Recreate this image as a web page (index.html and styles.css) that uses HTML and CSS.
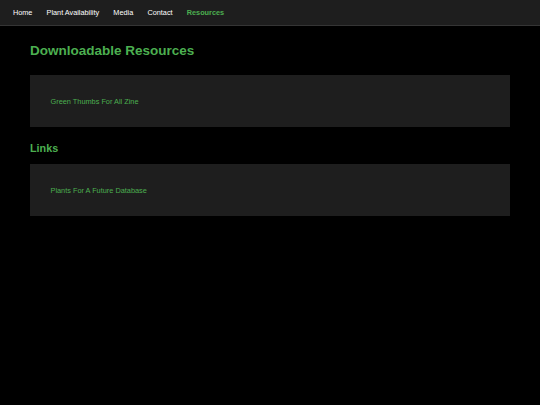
FILE: index.html
```html
<!DOCTYPE html>
<html>
<head>
<meta charset="utf-8">
<link rel="stylesheet" href="styles.css">
</head>
<body>
<nav class="nav">
  <a class="nav-link" href="#">Home</a>
  <a class="nav-link" href="#">Plant Availability</a>
  <a class="nav-link" href="#">Media</a>
  <a class="nav-link" href="#">Contact</a>
  <a class="nav-link active" href="#">Resources</a>
</nav>
<main class="main">
  <h1 class="title">Downloadable Resources</h1>
  <div class="card"><a class="card-link" href="#">Green Thumbs For All Zine</a></div>
  <h2 class="subtitle">Links</h2>
  <div class="card"><a class="card-link" href="#">Plants For A Future Database</a></div>
</main>
</body>
</html>
```
FILE: styles.css
```css
html, body {
  margin: 0;
  padding: 0;
  background: #000;
  font-family: "Liberation Sans", Arial, sans-serif;
}
.nav {
  display: flex;
  align-items: center;
  height: 25px;
  padding: 0 5.8px;
  background: #1e1e1e;
  border-bottom: 1px solid #353535;
}
.nav-link {
  color: #fff;
  text-decoration: none;
  font-size: 7.3px;
  line-height: 9px;
  padding: 0 7.1px;
}
.nav-link.active {
  color: #4caf50;
  font-weight: bold;
}
.main {
  padding: 0 30px;
}
.title {
  margin: 16.5px 0;
  color: #4caf50;
  font-size: 13.5px;
  font-weight: bold;
  line-height: 16px;
}
.subtitle {
  margin: 15px 0 9px;
  color: #4caf50;
  font-size: 10.8px;
  font-weight: bold;
  line-height: 13px;
}
.card {
  display: flex;
  align-items: center;
  height: 52px;
  padding: 0 20.5px;
  background: #1e1e1e;
}
.card-link {
  color: #4caf50;
  text-decoration: none;
  font-size: 7.35px;
  line-height: 9px;
}
```
